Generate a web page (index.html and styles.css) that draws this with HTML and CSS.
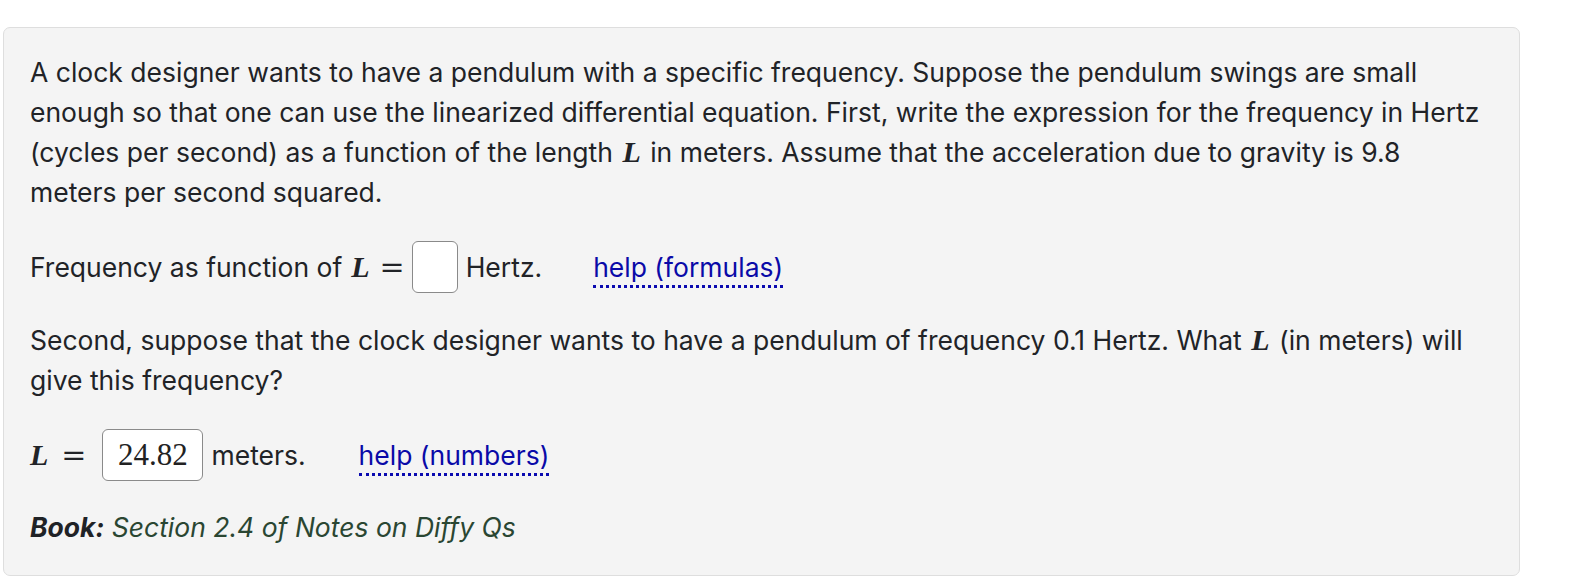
FILE: index.html
```html
<!DOCTYPE html>
<html>
<head>
<meta charset="utf-8">
<link rel="stylesheet" href="styles.css">
</head>
<body>
<div class="problem">
  <p class="para">A clock designer wants to have a pendulum with a specific frequency. Suppose the pendulum swings are small enough so that one can use the linearized differential equation. First, write the expression for the frequency in Hertz (cycles per second) as a function of the length <span class="mi">L</span> in meters. Assume that the acceleration due to gravity is 9.8 meters per second squared.</p>

  <div class="row row1">
    <span class="txt">Frequency as function of</span>
    <span class="math"><span class="mi">L</span><span class="mo">=</span></span>
    <span class="answer empty"></span>
    <span class="txt">Hertz.</span>
    <a class="help help1" href="#">help (formulas)</a>
  </div>

  <p class="para para2">Second, suppose that the clock designer wants to have a pendulum of frequency 0.1 Hertz. What <span class="mi">L</span> (in meters) will give this frequency?</p>

  <div class="row row2">
    <span class="math"><span class="mi">L</span><span class="mo">=</span></span>
    <span class="answer filled">24.82</span>
    <span class="txt">meters.</span>
    <a class="help help2" href="#">help (numbers)</a>
  </div>

  <p class="book"><b>Book:</b> <span class="ref">Section 2.4 of Notes on Diffy Qs</span></p>
</div>
</body>
</html>
```

FILE: styles.css
```css
html, body {
  margin: 0;
  padding: 0;
  background: #ffffff;
}

body {
  font-family: Inter, "Liberation Sans", sans-serif;
  font-size: 26.5px;
  color: #212327;
}

.problem {
  margin: 27px 52px 0 3px;
  background: #f4f4f4;
  border: 1px solid #dedede;
  border-radius: 7px;
  padding: 24px 34px 28px 26px;
}

.para {
  margin: 0;
  line-height: 40px;
}

.mi {
  font-family: "Liberation Serif", "DejaVu Serif", serif;
  font-style: italic;
  font-weight: bold;
  font-size: 30px;
  line-height: 1;
}

.para .mi {
  margin: 0 2px;
}

.mo {
  font-family: "DejaVu Serif", "Liberation Serif", serif;
  font-size: 30px;
  line-height: 1;
  margin-left: 10px;
}

.row {
  display: flex;
  align-items: center;
  margin-top: 29px;
  height: 52px;
}

.row1 .math {
  margin-left: 9px;
}

.row2 .mo {
  margin-left: 13px;
}

.answer {
  box-sizing: border-box;
  height: 52px;
  margin-left: 7px;
  margin-right: 8px;
  background: #ffffff;
  border: 1.5px solid #8a8a8a;
  border-radius: 6px;
  display: flex;
  align-items: center;
  justify-content: center;
}

.answer.empty {
  width: 46px;
}

.answer.filled {
  width: 101px;
  margin-left: 16px;
  font-family: "Liberation Serif", "DejaVu Serif", serif;
  font-size: 31px;
  color: #222;
}

.help {
  align-self: flex-start;
  color: #0a0aa8;
  text-decoration: none;
  border-bottom: 3.5px dotted #0a0ab0;
  line-height: 30px;
  padding-bottom: 2.5px;
  margin-top: 11px;
}

.help1 {
  margin-left: 51px;
}

.help2 {
  margin-left: 53px;
}

.para2 {
  margin-top: 27px;
}

.book {
  margin: 26px 0 0 0;
  line-height: 40px;
  font-style: italic;
}

.book b {
  font-weight: 700;
  color: #1f2226;
}

.book .ref {
  color: #2a4632;
}
```
